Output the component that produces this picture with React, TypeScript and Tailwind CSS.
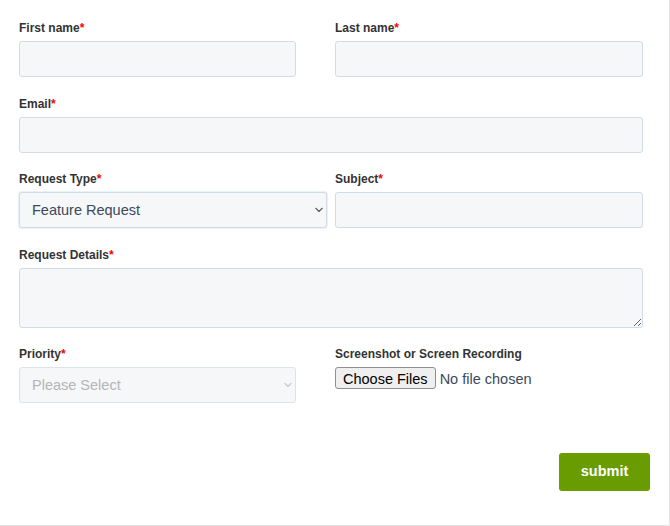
import React from 'react';

const font = { fontFamily: '"Liberation Sans", Arial, sans-serif' };

function Label({ text, required = true }: { text: string; required?: boolean }) {
  return (
    <label className="block text-[12px] leading-[14px] font-bold text-[#333] mb-1.5">
      {text}
      {required && <span className="text-[#f00]">*</span>}
    </label>
  );
}

function Chevron({ light = false }: { light?: boolean }) {
  return (
    <svg
      className="absolute right-[4px] top-1/2 -translate-y-1/2 pointer-events-none"
      width="8"
      height="5"
      viewBox="0 0 8 5"
      fill="none"
    >
      <path
        d="M0.7 0.7L4 4L7.3 0.7"
        stroke={light ? '#c4c8cc' : '#555'}
        strokeWidth="1.1"
        strokeLinecap="round"
        strokeLinejoin="round"
      />
    </svg>
  );
}

// base field look, width is set per field
const fieldCls =
  'block h-9 rounded-[3px] border border-[#d3dbe6] bg-[#f6f7f9] px-3 text-[14.5px] text-[#3b4a5a] outline-none';

export default function App() {
  return (
    <div className="w-[670px] h-[526px] bg-white border-r border-b border-[#e3e3e3]" style={font}>
      <form className="pl-[19px] pt-[21px]" onSubmit={(e) => e.preventDefault()}>
        <div className="grid grid-cols-[308px_308px] gap-x-2 gap-y-[19.5px]">
          <div>
            <Label text="First name" />
            <input type="text" className={`${fieldCls} w-[277px]`} />
          </div>
          <div>
            <Label text="Last name" />
            <input type="text" className={`${fieldCls} w-full`} />
          </div>

          <div className="col-span-2">
            <Label text="Email" />
            <input type="email" className={`${fieldCls} w-full`} />
          </div>

          <div>
            <Label text="Request Type" />
            <div className="relative">
              <select
                defaultValue="feature"
                className={`${fieldCls} w-full appearance-none pt-[2px] border-[#a6c9f0] shadow-[0_0_0_1px_rgba(166,201,240,0.25)]`}
              >
                <option value="bug">Bug Report</option>
                <option value="feature">Feature Request</option>
                <option value="question">Question</option>
              </select>
              <Chevron />
            </div>
          </div>
          <div>
            <Label text="Subject" />
            <input type="text" className={`${fieldCls} w-full`} />
          </div>

          <div className="col-span-2">
            <Label text="Request Details" />
            <textarea className={`${fieldCls} w-full h-[60px] py-2`} />
          </div>

          <div>
            <Label text="Priority" />
            <div className="relative w-[277px]">
              <select
                defaultValue=""
                className={`${fieldCls} w-full appearance-none pt-[2px] bg-[#f3f5f7] border-[#dde3ea] text-[#b5b5b5]`}
              >
                <option value="" disabled>
                  Please Select
                </option>
                <option value="low">Low</option>
                <option value="medium">Medium</option>
                <option value="high">High</option>
              </select>
              <Chevron light />
            </div>
          </div>
          <div>
            <Label text="Screenshot or Screen Recording" required={false} />
            <input
              type="file"
              multiple
              className="block text-[14.5px] leading-[22px] text-[#3b4a5a] file:mr-1 file:h-[22px] file:px-[7px] file:rounded-[3px] file:border file:border-[#8f8f8f] file:bg-[#efefef] file:text-[14.5px] file:text-black"
              style={font}
            />
          </div>
        </div>

        <div className="flex justify-end pr-[19px] mt-[49.5px]">
          <button
            type="submit"
            className="h-[38.5px] w-[91px] rounded-[3px] bg-[#689c00] text-[14.5px] font-bold text-white"
          >
            submit
          </button>
        </div>
      </form>
    </div>
  );
}
